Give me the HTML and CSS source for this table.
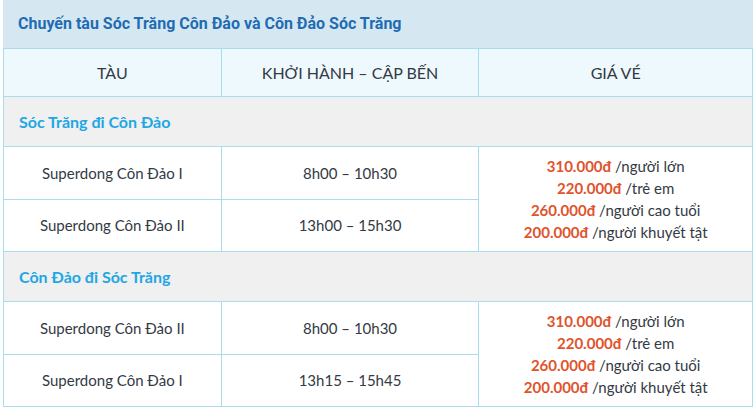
FILE: index.html
```html
<!DOCTYPE html>
<html lang="vi">
<head>
<meta charset="utf-8">
<title>Chuyến tàu Sóc Trăng Côn Đảo</title>
<link rel="stylesheet" href="styles.css">
</head>
<body>
<div class="wrap">
  <div class="title">Chuyến tàu Sóc Trăng Côn Đảo và Côn Đảo Sóc Trăng</div>
  <table class="schedule">
    <colgroup>
      <col class="c1"><col class="c2"><col class="c3">
    </colgroup>
    <thead>
      <tr class="head">
        <th>TÀU</th>
        <th>KHỞI HÀNH – CẬP BẾN</th>
        <th>GIÁ VÉ</th>
      </tr>
    </thead>
    <tbody>
      <tr class="section"><td colspan="3">Sóc Trăng đi Côn Đảo</td></tr>
      <tr class="row">
        <td>Superdong Côn Đảo I</td>
        <td>8h00 – 10h30</td>
        <td rowspan="2" class="price">
          <div><span class="amt">310.000đ</span> /người lớn</div>
          <div><span class="amt">220.000đ</span> /trẻ em</div>
          <div><span class="amt">260.000đ</span> /người cao tuổi</div>
          <div><span class="amt">200.000đ</span> /người khuyết tật</div>
        </td>
      </tr>
      <tr class="row">
        <td>Superdong Côn Đảo II</td>
        <td>13h00 – 15h30</td>
      </tr>
      <tr class="section"><td colspan="3">Côn Đảo đi Sóc Trăng</td></tr>
      <tr class="row">
        <td>Superdong Côn Đảo II</td>
        <td>8h00 – 10h30</td>
        <td rowspan="2" class="price">
          <div><span class="amt">310.000đ</span> /người lớn</div>
          <div><span class="amt">220.000đ</span> /trẻ em</div>
          <div><span class="amt">260.000đ</span> /người cao tuổi</div>
          <div><span class="amt">200.000đ</span> /người khuyết tật</div>
        </td>
      </tr>
      <tr class="row">
        <td>Superdong Côn Đảo I</td>
        <td>13h15 – 15h45</td>
      </tr>
    </tbody>
  </table>
</div>
</body>
</html>
```

FILE: styles.css
```css
html, body {
  margin: 0;
  padding: 0;
  background: #ffffff;
}

.wrap {
  width: 750px;
  margin-left: 3px;
}

.title {
  background: #d5e8f2;
  color: #1f6cb2;
  font-family: Roboto, "Liberation Sans", sans-serif;
  font-weight: 700;
  font-size: 16px;
  height: 48px;
  line-height: 47px;
  padding-left: 15px;
  box-sizing: border-box;
}

.schedule {
  width: 750px;
  border-collapse: collapse;
  font-family: Lato, "Open Sans", sans-serif;
  color: #333a44;
  font-size: 15px;
}

.c1 { width: 218px; }
.c2 { width: 258px; }
.c3 { width: 274px; }

.schedule th,
.schedule td {
  border: 1px solid #a8dcef;
  padding: 0;
}

.head th {
  background: #eef9fe;
  font-weight: 400;
  font-size: 16px;
  height: 47px;
  text-align: center;
  color: #333a44;
}

.section td {
  background: #f0f0f0;
  color: #1ea7e4;
  font-weight: 700;
  font-size: 16px;
  height: 49px;
  padding-left: 15px;
  text-align: left;
}

.row td {
  text-align: center;
  height: 51px;
}

.row td.price {
  line-height: 22px;
  padding: 8px 0;
}

.amt {
  color: #e0532b;
  font-weight: 700;
}
```
